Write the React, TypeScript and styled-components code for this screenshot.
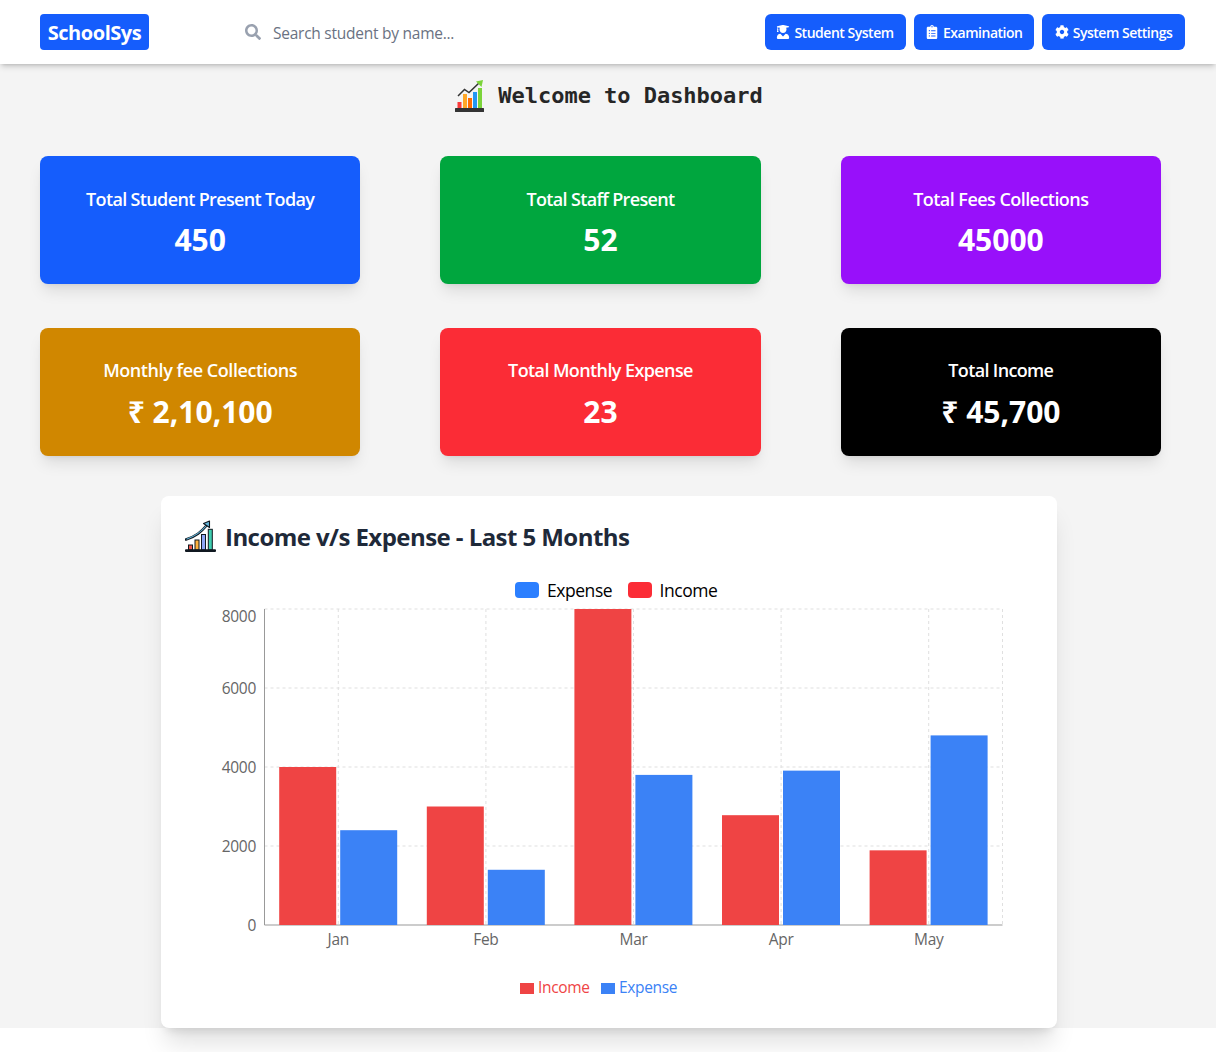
import React from "react";
import styled, { createGlobalStyle } from "styled-components";
import { FaSearch, FaUserGraduate, FaClipboardList, FaCog } from "react-icons/fa";

const GlobalStyle = createGlobalStyle`
  *, *::before, *::after { box-sizing: border-box; }
  body { margin: 0; min-height: 1052px; background: #fff; font-family: "Open Sans", "Noto Sans", sans-serif; }
  h1, h2, h3, p { margin: 0; }
`;

const Page = styled.div`
  height: 1028px;
  background: #f4f4f4;
`;

const Header = styled.header`
  position: relative;
  height: 64px;
  padding: 0 31px 0 40px;
  display: flex;
  align-items: center;
  background: #fff;
  box-shadow: 0 4px 6px -1px rgba(0, 0, 0, 0.14), 0 2px 4px -2px rgba(0, 0, 0, 0.2);
`;

const Brand = styled.div`
  width: 109px;
  height: 36px;
  border-radius: 4px;
  background: #155dfc;
  color: #fff;
  font-size: 20px;
  font-weight: 700;
  letter-spacing: -0.45px;
  line-height: 37px;
  text-align: center;
  white-space: nowrap;
`;

const Search = styled.label`
  margin-left: 96px;
  display: flex;
  align-items: center;
  gap: 12px;
  color: #99a1af;
  font-size: 16px;
`;

const SearchInput = styled.input`
  width: 300px;
  padding: 2px 0 0;
  border: 0;
  outline: 0;
  font: inherit;
  font-size: 15.5px;
  letter-spacing: -0.25px;
  &::placeholder { color: #6a7282; opacity: 1; }
`;

const Nav = styled.nav`
  margin-left: auto;
  display: flex;
  gap: 8px;
`;

const NavButton = styled.button<{ $width: number }>`
  width: ${(p) => p.$width}px;
  height: 36px;
  padding: 0;
  border: 0;
  border-radius: 6px;
  display: flex;
  align-items: center;
  justify-content: center;
  gap: 4px;
  background: #155dfc;
  color: #fff;
  font: 600 14px "Open Sans", "Noto Sans", sans-serif;
  letter-spacing: -0.48px;
  white-space: nowrap;
`;

const Title = styled.h1`
  height: 64px;
  display: flex;
  align-items: center;
  justify-content: center;
  gap: 13px;
  padding-left: 2px;
  font: 700 22px "DejaVu Sans Mono", monospace;
  letter-spacing: -0.03px;
  color: #262626;
`;

const TitleText = styled.span`
  padding-bottom: 2px;
`;

const StatGrid = styled.section`
  padding: 28px 55px 0 40px;
  display: grid;
  grid-template-columns: repeat(3, 1fr);
  column-gap: 80px;
  row-gap: 44px;
`;

const StatCard = styled.article<{ $color: string }>`
  height: 128px;
  padding-top: 29px;
  border-radius: 8px;
  background: ${(p) => p.$color};
  color: #fff;
  text-align: center;
  box-shadow: 0 10px 15px -3px rgba(0, 0, 0, 0.1), 0 4px 6px -4px rgba(0, 0, 0, 0.1);
  &:nth-child(n + 4) { padding-top: 28px; }
  &:nth-child(n + 4) p { margin-top: 9px; }
`;

const StatLabel = styled.h3<{ $spacing: number }>`
  font-size: 18px;
  font-weight: 600;
  line-height: 28px;
  letter-spacing: ${(p) => p.$spacing}px;
`;

const StatValue = styled.p`
  margin-top: 8px;
  font-size: 30px;
  font-weight: 700;
  line-height: 38px;
`;

const ChartCard = styled.section`
  width: 896px;
  height: 532px;
  margin: 40px 0 0 161px;
  padding: 24px;
  border-radius: 8px;
  background: #fff;
  box-shadow: 0 20px 25px -5px rgba(0, 0, 0, 0.12), 0 8px 10px -6px rgba(0, 0, 0, 0.12);
`;

const ChartTitle = styled.h2`
  height: 33px;
  display: flex;
  align-items: center;
  gap: 9px;
  color: #1e2939;
  font-size: 24px;
  font-weight: 700;
  letter-spacing: -0.56px;
`;

const TopLegend = styled.div`
  height: 24px;
  margin: 25px 0 7px 330px;
  display: flex;
  align-items: center;
  gap: 16px;
`;

const TopLegendItem = styled.span<{ $width: number }>`
  width: ${(p) => p.$width}px;
  display: flex;
  align-items: center;
  gap: 8px;
  color: #000;
  font-size: 17.5px;
  letter-spacing: -0.45px;
`;

const Swatch = styled.i<{ $color: string }>`
  width: 24px;
  height: 16px;
  margin-top: -1px;
  flex: none;
  border-radius: 4px;
  background: ${(p) => p.$color};
`;

const ChartSvg = styled.svg`
  display: block;
  width: 848px;
  height: 350px;
  margin-top: -4px;
  overflow: visible;
  font-size: 15.5px;
  letter-spacing: -0.3px;
`;

const BottomLegend = styled.div`
  height: 24px;
  margin: 20px 0 0 335px;
  display: flex;
  gap: 10px;
`;

const BottomItem = styled.span<{ $color: string; $width: number }>`
  width: ${(p) => p.$width}px;
  display: flex;
  align-items: center;
  gap: 4px;
  color: ${(p) => p.$color};
  font-size: 15.5px;
  letter-spacing: -0.35px;
  &::before {
    content: "";
    width: 14px;
    height: 10.5px;
    margin-top: 3px;
    flex: none;
    background: ${(p) => p.$color};
  }
`;

const stats = [
  { label: "Total Student Present Today", value: "450", color: "#155dfc", spacing: -0.65 },
  { label: "Total Staff Present", value: "52", color: "#00a63e", spacing: -0.66 },
  { label: "Total Fees Collections", value: "45000", color: "#9810fa", spacing: -0.55 },
  { label: "Monthly fee Collections", value: "₹ 2,10,100", color: "#d08700", spacing: -0.43 },
  { label: "Total Monthly Expense", value: "23", color: "#fb2c36", spacing: -0.6 },
  { label: "Total Income", value: "₹ 45,700", color: "#000", spacing: -0.65 },
];

const months = [
  { name: "Jan", income: 4000, expense: 2400 },
  { name: "Feb", income: 3000, expense: 1398 },
  { name: "Mar", income: 8000, expense: 3800 },
  { name: "Apr", income: 2780, expense: 3908 },
  { name: "May", income: 1890, expense: 4800 },
];

function GrowthIcon() {
  return (
    <svg width="30" height="34" viewBox="0 0 30 34">
      <path d="M3 17 9.5 10.5 14 13.5 24 4" fill="none" stroke="#333" strokeWidth="1.5" />
      <path d="M21 2.5 28 1 26.5 8Z" fill="#7bd43a" />
      <path d="M2.5 23h4v6h-4z" fill="#fb3b3b" />
      <path d="M8 15h4v14H8z" fill="#ffa726" />
      <path d="M13 19h4v10h-4z" fill="#ff6d00" />
      <path d="M18 13h4v16h-4z" fill="#2196f3" />
      <path d="M23 9h4v20h-4z" fill="#7bd43a" />
      <rect y="29" width="29" height="4" rx=".5" fill="#333" />
    </svg>
  );
}

function TrendIcon() {
  return (
    <svg width="31" height="33" viewBox="0 0 31 33">
      <path d="M1 19.5C11 16.5 16 12 22 5" fill="none" stroke="#101820" strokeWidth="2.6" strokeLinecap="round" />
      <path d="M1.5 19.2C11 16 16 12 21.5 5.5" fill="none" stroke="#64b5d9" strokeWidth="1.1" />
      <path d="M18.5 3.5 24.5 1V7.5Z" fill="#64b5d9" stroke="#101820" strokeWidth="1.1" strokeLinejoin="round" />
      <g stroke="#101820" strokeWidth="1">
        <rect x="3.5" y="25" width="4" height="5" fill="#f4574b" />
        <rect x="10" y="20" width="4" height="10" fill="#ffb13d" />
        <rect x="16.5" y="14.5" width="4" height="15.5" fill="#8ea6f5" />
        <rect x="23.3" y="9.3" width="4" height="20.7" fill="#3fceb0" />
      </g>
      <rect y="29.3" width="31" height="2.8" rx="1" fill="#101820" />
    </svg>
  );
}

const LEFT = 79.5;
const RIGHT = 817.5;
const TOP = 4;
const BASE = 320;
const STEP = (RIGHT - LEFT) / 5;
const yOf = (value: number) => BASE - (value / 8000) * (BASE - TOP);

function Chart() {
  return (
    <ChartSvg viewBox="0 0 848 350">
      <g stroke="#ccc" strokeWidth="1" strokeDasharray="3 3" opacity="0.6">
        {[8000, 6000, 4000, 2000].map((v) => (
          <line key={v} x1={LEFT} x2={RIGHT} y1={yOf(v)} y2={yOf(v)} />
        ))}
        {months.map((m, i) => (
          <line key={m.name} x1={LEFT + STEP * (i + 0.5)} x2={LEFT + STEP * (i + 0.5)} y1={TOP} y2={BASE} />
        ))}
        <line x1={RIGHT} x2={RIGHT} y1={TOP} y2={BASE} />
      </g>
      <path d={`M${LEFT} ${TOP}V${BASE}H${RIGHT}`} fill="none" stroke="#999" />
      {months.map((m, i) => {
        const x = LEFT + STEP * i + 14.7;
        return (
          <g key={m.name}>
            <rect x={x} y={yOf(m.income)} width="57" height={BASE - yOf(m.income)} fill="#ef4444" />
            <rect x={x + 61} y={yOf(m.expense)} width="57" height={BASE - yOf(m.expense)} fill="#3b82f6" />
            <text x={LEFT + STEP * (i + 0.5)} y={BASE + 19.5} textAnchor="middle" fill="#666">{m.name}</text>
          </g>
        );
      })}
      {[0, 2000, 4000, 6000, 8000].map((v) => (
        <text key={v} x="71" y={v === 8000 ? 17 : yOf(v) + 5.5} textAnchor="end" fill="#666">{v}</text>
      ))}
    </ChartSvg>
  );
}

export default function App() {
  return (
    <>
      <GlobalStyle />
      <Page>
        <Header>
          <Brand>SchoolSys</Brand>
          <Search>
            <FaSearch />
            <SearchInput placeholder="Search student by name..." />
          </Search>
          <Nav>
            <NavButton $width={141}><FaUserGraduate />Student System</NavButton>
            <NavButton $width={120.5}><FaClipboardList />Examination</NavButton>
            <NavButton $width={143}><FaCog />System Settings</NavButton>
          </Nav>
        </Header>
        <Title><GrowthIcon /><TitleText>Welcome to Dashboard</TitleText></Title>
        <StatGrid>
          {stats.map((s) => (
            <StatCard key={s.label} $color={s.color}>
              <StatLabel $spacing={s.spacing}>{s.label}</StatLabel>
              <StatValue>{s.value}</StatValue>
            </StatCard>
          ))}
        </StatGrid>
        <ChartCard>
          <ChartTitle><TrendIcon />Income v/s Expense - Last 5 Months</ChartTitle>
          <TopLegend>
            <TopLegendItem $width={96.5}><Swatch $color="#2b7fff" />Expense</TopLegendItem>
            <TopLegendItem $width={92}><Swatch $color="#fb2c36" />Income</TopLegendItem>
          </TopLegend>
          <Chart />
          <BottomLegend>
            <BottomItem $color="#ef4444" $width={71}>Income</BottomItem>
            <BottomItem $color="#3b82f6" $width={76}>Expense</BottomItem>
          </BottomLegend>
        </ChartCard>
      </Page>
    </>
  );
}
